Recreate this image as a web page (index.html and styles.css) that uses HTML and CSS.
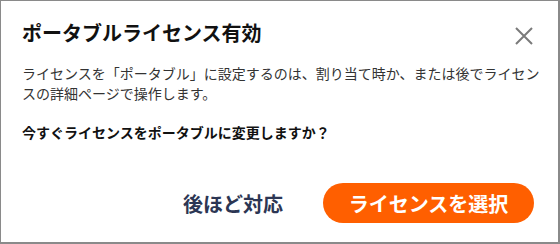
FILE: index.html
```html
<!DOCTYPE html>
<html>
<head>
    <title>ポータブルライセンス有効</title>
    <link rel="stylesheet" href="styles.css">
</head>
<body>
    <div class="dialog">
        <div class="dialog-header">
            <h1>ポータブルライセンス有効</h1>
            <button class="close" aria-label="閉じる">
                <svg width="18" height="18" viewBox="0 0 18 18">
                    <path d="M1 1 L17 17 M17 1 L1 17" stroke="#7a7a7a" stroke-width="2" fill="none"/>
                </svg>
            </button>
        </div>
        <p class="desc">ライセンスを「ポータブル」に設定するのは、割り当て時か、または後でライセンスの詳細ページで操作します。</p>
        <p class="question">今すぐライセンスをポータブルに変更しますか？</p>
        <div class="dialog-footer">
            <button class="later">後ほど対応</button>
            <button class="select">ライセンスを選択</button>
        </div>
    </div>
</body>
</html>
```

FILE: styles.css
```css
body {
    margin: 0;
    font-family: "Noto Sans CJK JP", "Noto Sans", sans-serif;
    background: #fff;
}
.dialog {
    width: 560px;
    height: 244px;
    box-sizing: border-box;
    border: 1px solid #8a8a8a;
    border-right-width: 2px;
    border-bottom-width: 2px;
    padding: 18px 12px 0 21px;
    display: flex;
    flex-direction: column;
}
.dialog-header {
    display: flex;
    justify-content: space-between;
    align-items: center;
}
.dialog-header h1 {
    margin: 0;
    font-size: 20px;
    line-height: 28px;
    font-weight: bold;
    color: #111;
}
.close {
    background: none;
    border: none;
    padding: 0;
    margin: 6px 13px 0 0;
    width: 18px;
    height: 18px;
    cursor: pointer;
}
.close svg {
    display: block;
}
.desc {
    margin: 16px 0 0 0;
    font-size: 14px;
    line-height: 20px;
    color: #333;
}
.question {
    margin: 19px 0 0 0;
    font-size: 14px;
    line-height: 20px;
    font-weight: bold;
    color: #111;
}
.dialog-footer {
    display: flex;
    justify-content: flex-end;
    align-items: center;
    gap: 40px;
    margin-top: 41px;
    margin-right: 12px;
}
.dialog-footer button {
    font-family: inherit;
    font-size: 20px;
    font-weight: bold;
    border: none;
    cursor: pointer;
}
.later {
    background: none;
    color: #2c3654;
    padding: 0;
}
.select {
    background: #ff5f00;
    color: #fff;
    height: 40px;
    width: 211px;
    border-radius: 20px;
    padding: 0;
}
```
